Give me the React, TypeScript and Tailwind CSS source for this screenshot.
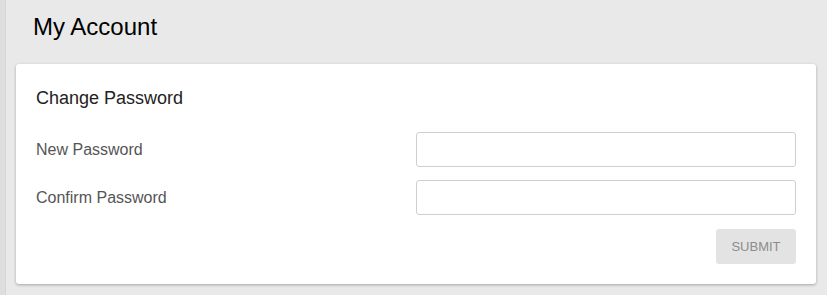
export default function App() {
  return (
    <div className="flex h-[295px] w-[827px] bg-[#e9e9e9] font-['Liberation_Sans',Arial,sans-serif]">
      <div className="w-[6px] shrink-0 border-r border-[#d6d6d6] bg-[#dedede]" />
      <div className="flex-1 pl-[10px] pr-[11px]">
        <h1 className="pl-[17px] pt-[12px] text-[24px] leading-[30px] text-black">My Account</h1>
        <div className="mt-[22px] rounded-[3px] bg-white px-[20px] pb-[20px] pt-[23px] shadow-[0_1px_3px_rgba(0,0,0,0.3)]">
          <h2 className="text-[18px] leading-[22px] text-[#222]">Change Password</h2>
          <div className="mt-[23px] flex flex-col gap-[13px]">
            <div className="flex items-center justify-between">
              <label className="text-[16px] text-[#555]">New Password</label>
              <input type="password" className="h-[35px] w-[380px] rounded-[3px] border border-[#cfcfcf] bg-white" />
            </div>
            <div className="flex items-center justify-between">
              <label className="text-[16px] text-[#555]">Confirm Password</label>
              <input type="password" className="h-[35px] w-[380px] rounded-[3px] border border-[#cfcfcf] bg-white" />
            </div>
          </div>
          <div className="mt-[14px] flex justify-end">
            <button className="h-[35px] w-[80px] rounded-[3px] bg-[#e3e3e3] text-[13px] text-[#8c8c8c]">SUBMIT</button>
          </div>
        </div>
      </div>
    </div>
  );
}
